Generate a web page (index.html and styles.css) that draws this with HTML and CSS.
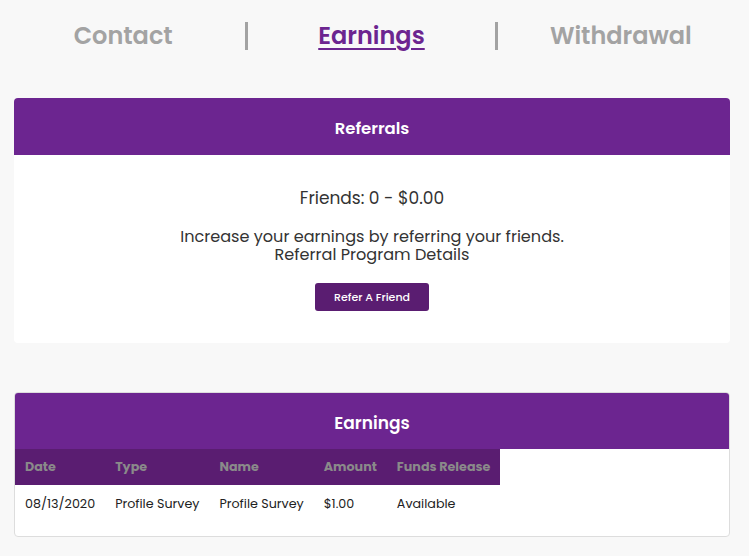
FILE: index.html
```html
<!DOCTYPE html>
<html lang="en">
<head>
  <meta charset="UTF-8" />
  <meta name="viewport" content="width=device-width, initial-scale=1.0" />
  <title>Account | Earnings</title>
  <link rel="stylesheet" href="styles.css">
</head>
<body>
  <div class="page">
    <nav class="tabs">
      <a href="#contact" class="tab">Contact</a>
      <a href="#earnings" class="tab active">Earnings</a>
      <a href="#withdrawal" class="tab">Withdrawal</a>
    </nav>

    <section class="panel">
      <div class="panel-head">Referrals</div>
      <div class="panel-body referral">
        <p class="friends">Friends: 0 - $0.00</p>
        <p class="promo">Increase your earnings by referring your friends.<br>Referral Program Details</p>
        <button class="btn">Refer A Friend</button>
      </div>
    </section>

    <section class="panel bordered">
      <div class="panel-head">Earnings</div>
      <div class="panel-body earnings">
        <table>
          <thead>
            <tr><th>Date</th><th>Type</th><th>Name</th><th>Amount</th><th>Funds Release</th></tr>
          </thead>
          <tbody>
            <tr><td>08/13/2020</td><td>Profile Survey</td><td>Profile Survey</td><td>$1.00</td><td>Available</td></tr>
          </tbody>
        </table>
      </div>
    </section>
  </div>
</body>
</html>
```

FILE: styles.css
```css
:root{
  --purple:#6c2590;
  --purple-dark:#5a1d71;
  --bg:#f8f8f8;
  --radius:4px;
}
*{box-sizing:border-box;font-family:Poppins,Inter,Arial,sans-serif}
body{margin:0;background:var(--bg);color:#333}
.page{width:744px}

.tabs{display:flex;padding:22px 0 0}
.tab{
  flex:1;text-align:center;text-decoration:none;
  font-size:24px;font-weight:600;color:#a3a3a3;line-height:28px;
  border-left:3px solid #a3a3a3;
}
.tab:first-child{border-left:none}
.tab:nth-child(2){margin-left:-1px}
.tab.active{color:var(--purple);text-decoration:underline;text-underline-offset:4px}

.panel{margin:48px 14px 0;background:#fff;border-radius:var(--radius);overflow:hidden}
.panel.bordered{margin-top:49px;border:1px solid #ddd}
.panel-head{
  background:var(--purple);color:#fff;text-align:center;
  font-size:16.5px;font-weight:600;height:57px;line-height:53px;padding-top:4px;
}
.bordered .panel-head{height:56px;line-height:51px;padding-top:5px;font-size:17px}

.referral{text-align:center;padding:31px 0 32px}
.referral p{margin:0}
.friends{font-size:17px;line-height:24px;color:#333}
.promo{font-size:16.1px;line-height:18px;margin-top:18px !important;color:#333}
.btn{
  display:block;margin:19px auto 0;background:var(--purple-dark);color:#fff;border:none;
  border-radius:3px;width:114px;height:28px;font-size:11px;font-weight:500;
}

.earnings{padding-bottom:14px}
table{border-collapse:collapse}
th,td{text-align:left;padding:0 10px;white-space:nowrap}
th{
  background:var(--purple-dark);color:#8a8a8a;font-size:12.7px;font-weight:700;
  height:36px;
}
td{font-size:12.7px;color:#222;height:37px;padding-top:1px}
```
